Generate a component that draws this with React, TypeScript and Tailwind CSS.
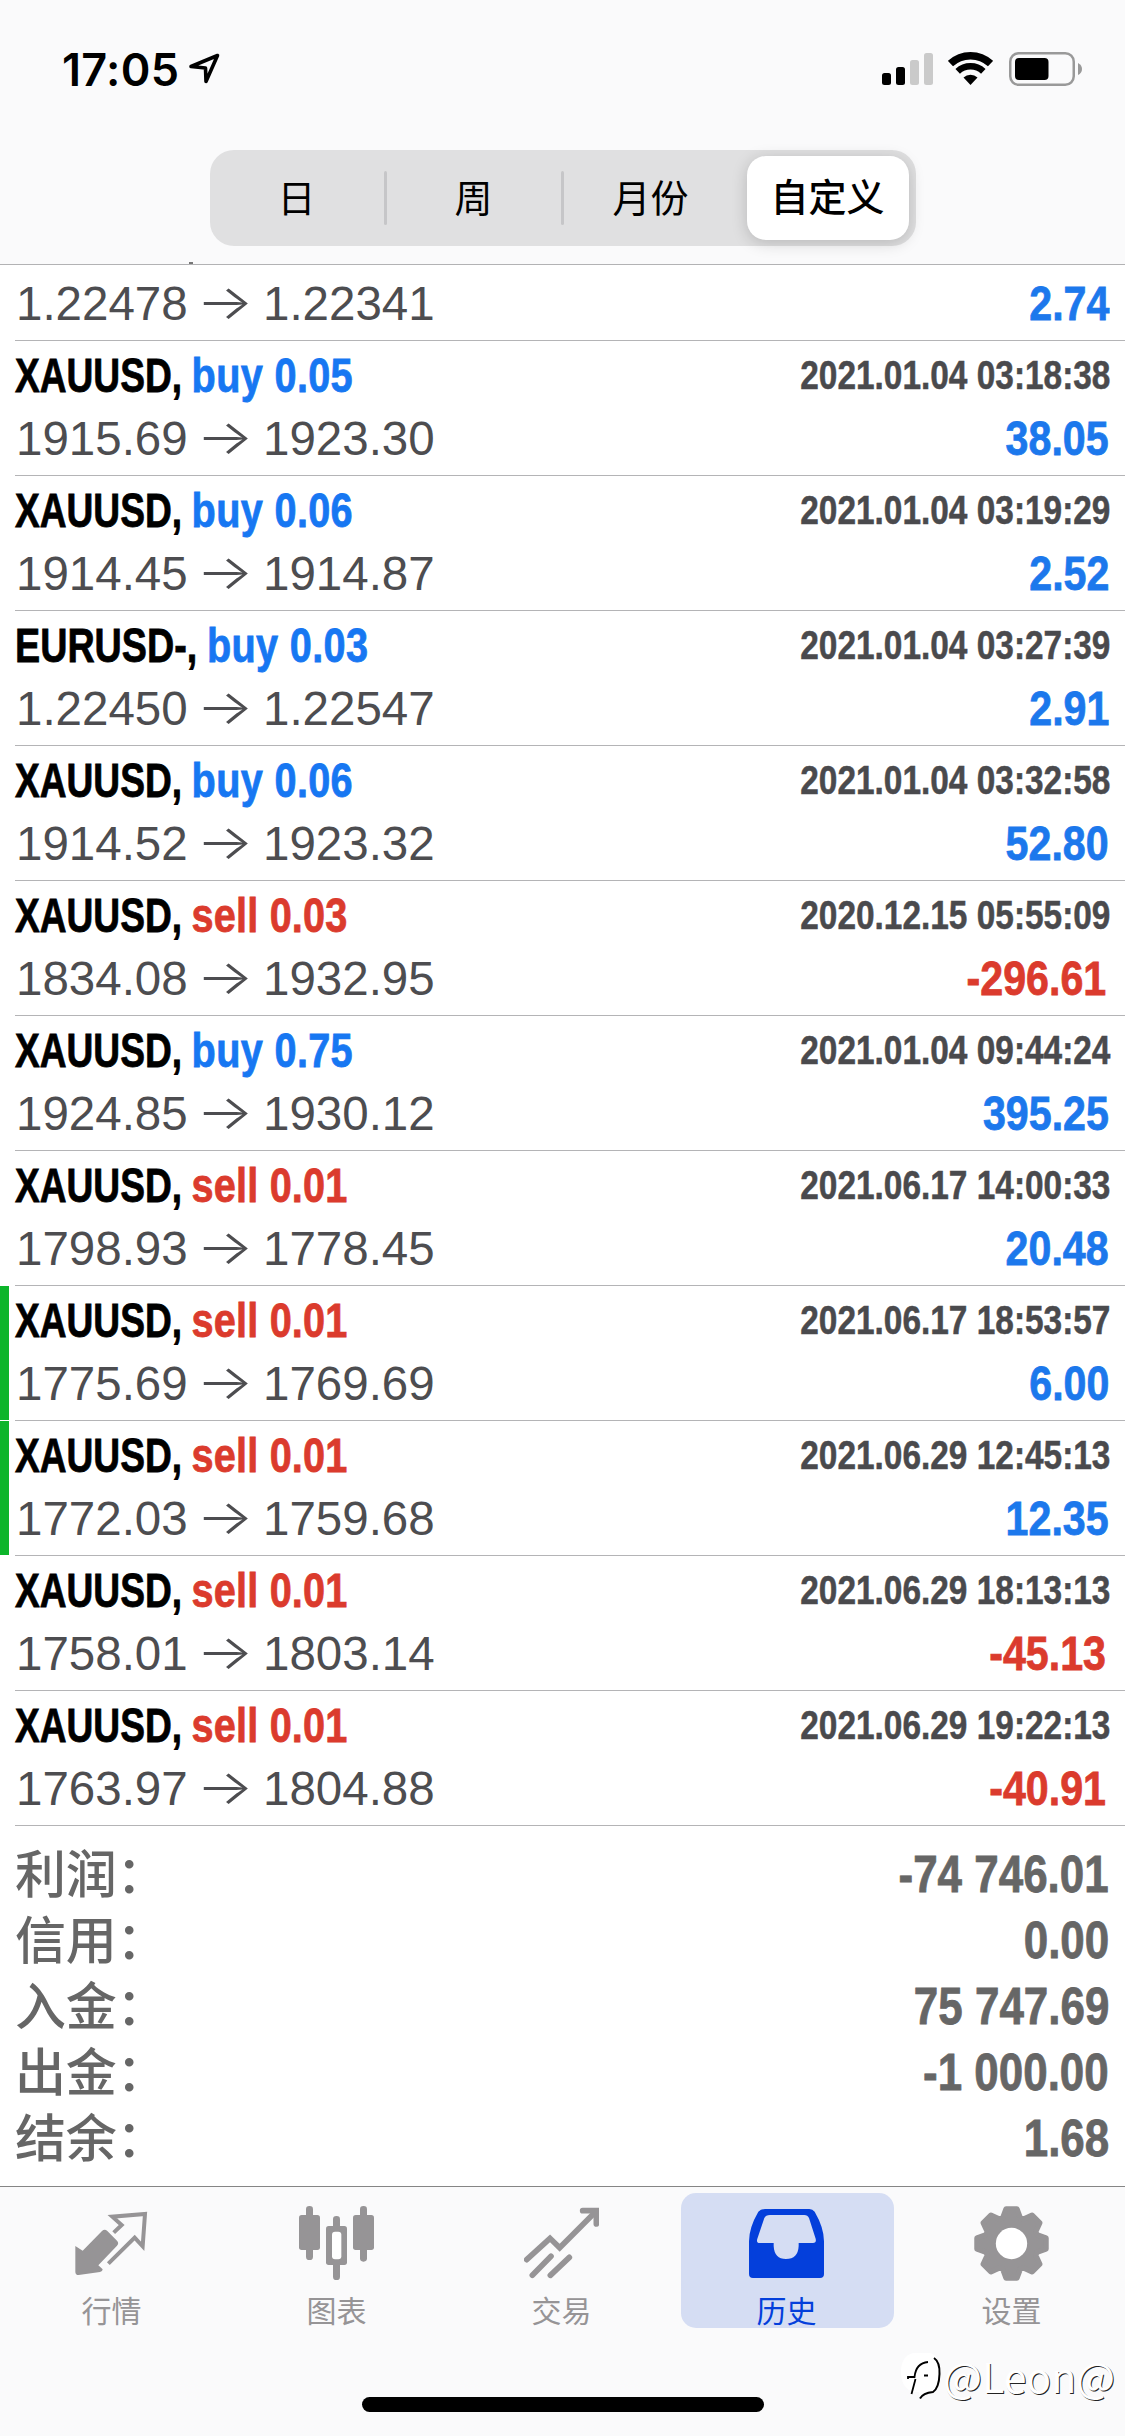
import React from "react";
import clsx from "clsx";

interface Deal {
  symbol: string;
  side: "buy" | "sell";
  volume: string;
  open: string;
  close: string;
  time: string;
  profit: string;
  marked?: boolean;
}

const deals: Deal[] = [
  { symbol: "XAUUSD", side: "buy", volume: "0.05", open: "1915.69", close: "1923.30", time: "2021.01.04 03:18:38", profit: "38.05" },
  { symbol: "XAUUSD", side: "buy", volume: "0.06", open: "1914.45", close: "1914.87", time: "2021.01.04 03:19:29", profit: "2.52" },
  { symbol: "EURUSD-", side: "buy", volume: "0.03", open: "1.22450", close: "1.22547", time: "2021.01.04 03:27:39", profit: "2.91" },
  { symbol: "XAUUSD", side: "buy", volume: "0.06", open: "1914.52", close: "1923.32", time: "2021.01.04 03:32:58", profit: "52.80" },
  { symbol: "XAUUSD", side: "sell", volume: "0.03", open: "1834.08", close: "1932.95", time: "2020.12.15 05:55:09", profit: "-296.61" },
  { symbol: "XAUUSD", side: "buy", volume: "0.75", open: "1924.85", close: "1930.12", time: "2021.01.04 09:44:24", profit: "395.25" },
  { symbol: "XAUUSD", side: "sell", volume: "0.01", open: "1798.93", close: "1778.45", time: "2021.06.17 14:00:33", profit: "20.48" },
  { symbol: "XAUUSD", side: "sell", volume: "0.01", open: "1775.69", close: "1769.69", time: "2021.06.17 18:53:57", profit: "6.00", marked: true },
  { symbol: "XAUUSD", side: "sell", volume: "0.01", open: "1772.03", close: "1759.68", time: "2021.06.29 12:45:13", profit: "12.35", marked: true },
  { symbol: "XAUUSD", side: "sell", volume: "0.01", open: "1758.01", close: "1803.14", time: "2021.06.29 18:13:13", profit: "-45.13" },
  { symbol: "XAUUSD", side: "sell", volume: "0.01", open: "1763.97", close: "1804.88", time: "2021.06.29 19:22:13", profit: "-40.91" },
];

const totals = [
  { label: "利润：", value: "-74 746.01" },
  { label: "信用：", value: "0.00" },
  { label: "入金：", value: "75 747.69" },
  { label: "出金：", value: "-1 000.00" },
  { label: "结余：", value: "1.68" },
];

const periods = ["日", "周", "月份", "自定义"];

const StatusBar = () => (
  <div className="flex h-[150px] items-start justify-between pl-[62px] pr-[43px] pt-[52px]">
    <div className="flex items-start">
      <span className="w-[126px] font-['Inter',sans-serif] text-[45px] font-semibold leading-[35px] tracking-[0.3px]">
        17:05
      </span>
      <svg width="34" height="34" viewBox="0 0 34 34" fill="none">
        <path d="M29.5 3.5 3 14.5 17.5 16 18 29.5Z" stroke="black" strokeWidth="3.6" strokeLinejoin="round" />
      </svg>
    </div>
    <div className="flex items-start">
      <svg width="51" height="34" viewBox="0 0 51 34" className="mr-[15px]">
        <rect x="0" y="21" width="9" height="12" rx="2.5" />
        <rect x="14" y="15" width="9" height="18" rx="2.5" />
        <rect x="28" y="8" width="9" height="25" rx="2.5" fill="#cacaca" />
        <rect x="42" y="1" width="9" height="32" rx="2.5" fill="#cacaca" />
      </svg>
      <svg width="45" height="34" viewBox="0 0 45 34" className="mr-4" fill="none">
        <path d="M2.5 11.6A29.3 29.3 0 0 1 42.5 11.6" stroke="black" strokeWidth="7.4" />
        <path d="M9.7 19.3A18.8 18.8 0 0 1 35.3 19.3" stroke="black" strokeWidth="6.6" />
        <path d="M22.5 33 15.5 25.5A10.3 10.3 0 0 1 29.5 25.5Z" fill="black" />
      </svg>
      <svg width="73" height="34" viewBox="0 0 73 34">
        <rect x="1.25" y="1.25" width="63.5" height="31.5" rx="8.5" fill="none" stroke="#999" strokeWidth="2.5" />
        <rect x="6" y="6" width="33.5" height="22" rx="4" />
        <path d="M69 11Q73 13 73 17T69 23Z" fill="#999" />
      </svg>
    </div>
  </div>
);

const PeriodTabs = () => (
  <div className="mx-auto flex h-24 w-[706px] items-center rounded-[24px] bg-[#e0e0e1] pr-[7px]">
    {periods.map((label, i) => {
      const selected = i === periods.length - 1;
      return (
        <React.Fragment key={label}>
          {(i === 1 || i === 2) && <span className="h-[54px] w-[3px] rounded-full bg-[#c6c6c8]" />}
          <button
            className={clsx(
              "flex h-[84px] items-center justify-center text-[38px]",
              selected
                ? "ml-auto w-[162px] rounded-[19px] bg-white font-medium shadow-[0_3px_16px_rgba(0,0,0,0.18)]"
                : "w-[174px] pt-[2px]"
            )}
          >
            {label}
          </button>
        </React.Fragment>
      );
    })}
  </div>
);

const Prices = ({ open, close }: { open: string; close: string }) => (
  <div className="flex pl-px text-[47.5px] text-[#4d4d50]">
    <span className="w-[171px]">{open}</span>
    <span className="w-[76px] origin-center scale-x-[1.27] text-center font-['Inter',sans-serif] font-light leading-[70px]">
      →
    </span>
    <span>{close}</span>
  </div>
);

const Profit = ({ value }: { value: string }) => (
  <span
    className={clsx(
      "origin-right scale-x-[0.84] text-[49px] font-bold leading-[72px] [-webkit-text-stroke:0.8px]",
      value.startsWith("-") ? "mr-[5px] text-[#db3b2d]" : "mr-[2px] text-[#1c78ec]"
    )}
  >
    {value}
  </span>
);

const DealRow = ({ deal }: { deal: Deal }) => (
  <li className="flex h-[135px]">
    <span className={clsx("mr-1.5 h-[134px] w-[9px]", deal.marked && "bg-[#0db52b]")} />
    <div className="flex-1 border-b border-[#b4b4b6] pr-[14px] pt-[7px]">
      <div className="flex h-[54px] justify-between leading-[54px]">
        <div className="flex origin-left scale-x-[0.81] whitespace-pre text-[49px] font-bold [-webkit-text-stroke:0.8px]">
          <span
            className={clsx(
              "origin-left text-black",
              deal.symbol.endsWith("-") ? "w-[237px] scale-x-[0.95]" : "w-[218px] scale-x-[0.935]"
            )}
          >
            {deal.symbol},
          </span>
          <span
            className={clsx(
              deal.side === "buy" ? "tracking-[0.4px] text-[#1777f2]" : "tracking-[0.2px] text-[#db3b2d]"
            )}
          >
            {deal.side} {deal.volume}
          </span>
        </div>
        <span className="mr-[1px] origin-right scale-x-[0.835] text-[40px] font-bold text-[#4a4a4d] [-webkit-text-stroke:0.5px]">
          {deal.time}
        </span>
      </div>
      <div className="flex h-[73px] justify-between leading-[74px]">
        <Prices open={deal.open} close={deal.close} />
        <Profit value={deal.profit} />
      </div>
    </div>
  </li>
);

const QuotesIcon = () => (
  <svg className="shrink-0" width="75" height="75" viewBox="0 0 225 225" fill="none">
    <path
      d="M4 120 26 134 84 75Q92 68 100 75L129 104Q136 112 129 119L73 178 86 190Q86 197 78 198L14 207Q4 207 4 197Z"
      fill="currentColor"
    />
    <path d="M119 80 143 57 115 32 213 24 206 121 182 95 103 173" stroke="currentColor" strokeWidth="12" />
  </svg>
);

const ChartIcon = () => (
  <svg className="shrink-0" width="75" height="75" viewBox="0 0 225 225" fill="currentColor">
    <rect x="21" y="0" width="21" height="162" rx="10" />
    <rect x="0" y="27" width="63" height="105" rx="8" />
    <rect x="102" y="30" width="21" height="192" rx="10" />
    <rect x="81" y="60" width="63" height="117" rx="8" />
    <rect x="99" y="77" width="28" height="83" rx="9" fill="white" />
    <rect x="183" y="0" width="21" height="167" rx="10" />
    <rect x="162" y="27" width="63" height="105" rx="8" />
  </svg>
);

const TradeIcon = () => (
  <svg className="shrink-0" width="75" height="75" viewBox="0 0 225 225" fill="none" stroke="currentColor" strokeLinecap="round">
    <path d="M8 161 78 97 107 125 214 18" strokeWidth="17" />
    <path d="M176 14H217V54" strokeWidth="17" />
    <path d="M25 208 81 151M79 208 136 154" strokeWidth="17" />
  </svg>
);

const HistoryIcon = () => (
  <svg className="shrink-0" width="75" height="75" viewBox="0 0 225 225" fill="currentColor">
    <path
      fillRule="evenodd"
      d="M48 9H181Q191 9 197 17Q225 65 225 106V204Q225 216 213 216H12Q0 216 0 204V106Q0 65 28 17Q36 9 48 9ZM63 27Q50 27 46 36L25 98Q21 111 32 111H74V120Q76 159 111 159Q147 159 149 120V111H192Q203 111 200 98L180 36Q176 27 166 27Z"
    />
  </svg>
);

// Eight teeth: flat tip, then down to the valley between two teeth
const gearPoints = Array.from({ length: 8 }, (_, i) =>
  [
    [-9, 105],
    [9, 105],
    [19, 81],
    [26, 81],
  ].map(([offset, r]) => {
    const a = ((i * 45 + offset - 90) * Math.PI) / 180;
    return `${(112.5 + r * Math.cos(a)).toFixed(1)},${(112.5 + r * Math.sin(a)).toFixed(1)}`;
  })
)
  .flat()
  .join(" ");

const SettingsIcon = () => (
  <svg className="shrink-0" width="75" height="75" viewBox="0 0 225 225" fill="currentColor">
    <polygon points={gearPoints} stroke="currentColor" strokeWidth="16" strokeLinejoin="round" />
    <circle cx="112.5" cy="112.5" r="47" fill="white" />
  </svg>
);

const tabs = [
  { label: "行情", Icon: QuotesIcon },
  { label: "图表", Icon: ChartIcon },
  { label: "交易", Icon: TradeIcon },
  { label: "历史", Icon: HistoryIcon, active: true },
  { label: "设置", Icon: SettingsIcon },
];

const TabBar = () => (
  <nav className="grid grid-cols-5 pt-1.5">
    {tabs.map(({ label, Icon, active }) => (
      <button
        key={label}
        className={clsx(
          "mx-auto flex h-[135px] w-[213px] flex-col items-center rounded-[15px] pr-0.5 pt-[13px]",
          active ? "bg-[#d5ddf3] text-[#043fdb]" : "text-[#969496]"
        )}
      >
        <Icon />
        <span className="mt-2.5 text-[30px] leading-[42px]">{label}</span>
      </button>
    ))}
  </nav>
);

const Watermark = () => (
  <div className="absolute right-[10px] top-[163px] flex items-start">
    <svg width="42" height="52" viewBox="0 0 42 52" fill="none">
      <path d="M12 3H29Q39 6 39 22T31 42L19 48 18 42H12Q0 38 0 22T12 3Z" fill="white" />
      <path d="M10.5 44 14.5 29M7 29V27H13.5Q15 13 27 12M23 25.5H27" stroke="black" strokeWidth="1.8" />
      <path d="M33 8Q39 12 38.500 24Q38 38 32 42Q22 43 19 48.500" stroke="black" strokeWidth="2" />
    </svg>
    <span className="font-['Noto_Sans_CJK_SC',sans-serif] text-[41px] leading-[50px] text-white [text-shadow:1px_1px_0_#222]">
      @Leon@
    </span>
  </div>
);

export default function App() {
  return (
    <div className="h-[2436px] w-[1125px] overflow-hidden bg-white font-['Liberation_Sans','Noto_Sans_CJK_SC',sans-serif] text-black">
      <header className="relative h-[265px] border-b border-[#b2b2b4] bg-[#fafafb]">
        <StatusBar />
        <PeriodTabs />
        <span className="absolute bottom-0 left-[189px] h-0.5 w-1 bg-[#777]" />
      </header>

      <main className="h-[1921px]">
        {/* Row scrolled halfway under the header */}
        <div className="ml-[15px] flex h-[76px] justify-between border-b border-[#b4b4b6] pr-[14px] pt-0.5 leading-[74px]">
          <Prices open="1.22478" close="1.22341" />
          <Profit value="2.74" />
        </div>
        <ul>
          {deals.map((deal) => (
            <DealRow key={deal.open} deal={deal} />
          ))}
        </ul>
        <dl className="pl-[15px] pr-4 pt-[14px] text-[#666]">
          {totals.map(({ label, value }) => (
            <div key={label} className="flex h-[66px] items-center justify-between leading-[66px]">
              <dt className="pt-1.5 text-[51px] font-medium tracking-[-0.3px]">{label}</dt>
              <dd className="origin-right scale-x-[0.845] pt-[2px] text-[52px] font-bold [-webkit-text-stroke:0.8px]">
                {value}
              </dd>
            </div>
          ))}
        </dl>
      </main>

      <footer className="relative h-[250px] border-t border-[#858585] bg-[#fafafb]">
        <TabBar />
        <div className="mx-auto mt-[69px] h-[15px] w-[402px] rounded-full bg-black" />
        <Watermark />
      </footer>
    </div>
  );
}
